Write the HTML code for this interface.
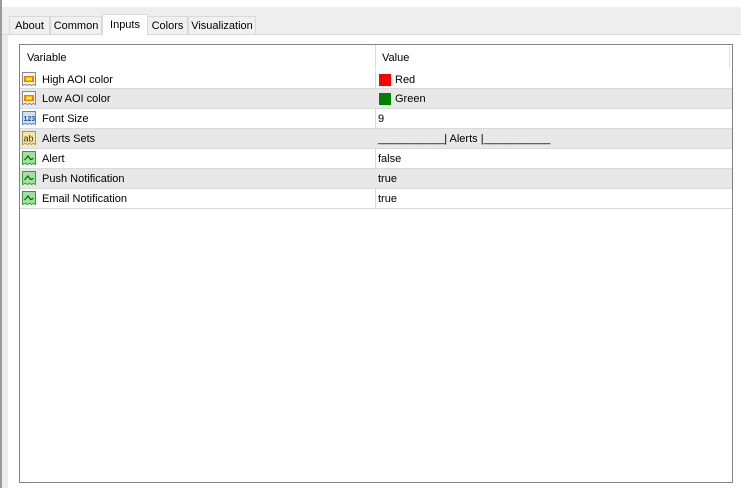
<!DOCTYPE html><html><head><style>
body{margin:0;width:741px;height:488px;background:#fff;font-family:"Liberation Sans",Arial,sans-serif;font-size:11px;color:#000;position:relative;overflow:hidden}
.a{position:absolute}
.tab{position:absolute;top:16px;height:18px;border:1px solid #d9d9d9;border-bottom:none;background:#f0f0f0;line-height:18px;text-align:center;box-sizing:border-box}
.row{position:absolute;left:20px;width:712px;height:20px;border-bottom:1px solid #dadada;box-sizing:border-box;line-height:21px}
.g{background:#e8e8e8}
.v{position:absolute;left:358px;top:0}
.n{position:absolute;left:22px;top:0}
.ic{position:absolute;left:1px;top:1px;width:17px;height:17px}
.u{letter-spacing:-0.6px}
</style></head><body>
<div class="a" style="left:0;top:7px;width:741px;height:27px;background:#eeeeee;border-bottom:1px solid #d9d9d9"></div>
<div class="a" style="left:0;top:0;width:2px;height:488px;background:#9a9a9a"></div>
<div class="a" style="left:2px;top:35px;width:6px;height:453px;background:#ececec"></div>
<div class="tab" style="left:9px;width:41px">About</div>
<div class="tab" style="left:50px;width:52px">Common</div>
<div class="tab" style="left:102px;width:46px;top:14px;height:22px;background:#fff;line-height:20px">Inputs</div>
<div class="tab" style="left:147px;width:41px">Colors</div>
<div class="tab" style="left:188px;width:68px">Visualization</div>
<div class="a" style="left:19px;top:44px;width:712px;height:437px;border:1px solid #80848a;background:#fff"></div>
<div class="a" style="left:375px;top:45px;width:1px;height:164px;background:#dadada"></div>
<div class="row" style="top:48px;border:none"><span class="a" style="left:7px;top:0">Variable</span><span class="a" style="left:362px;top:0">Value</span></div>
<div class="a" style="left:729px;top:46px;width:1px;height:22px;background:#ddd"></div>
<div class="row" style="top:69px;border-top:1px solid #fff"><svg class="ic" viewBox="0 0 17 17"><path d="M1.5 1.5h13v13l-2-1.2-2 1.2-2-1.2-2 1.2-2-1.2-3 1.2z" fill="#f4f4f4" stroke="#888"/><rect x="3" y="5" width="10" height="6" fill="#f70"/><rect x="5" y="6.5" width="6" height="3" fill="#ff0"/></svg><span class="n">High AOI color</span><span class="v"><i class="a" style="left:1px;top:4px;width:12px;height:12px;background:#f00"></i><span class="a" style="left:17px">Red</span></span></div>
<div class="row g" style="top:89px"><svg class="ic" viewBox="0 0 17 17"><path d="M1.5 1.5h13v13l-2-1.2-2 1.2-2-1.2-2 1.2-2-1.2-3 1.2z" fill="#f4f4f4" stroke="#888"/><rect x="3" y="5" width="10" height="6" fill="#f70"/><rect x="5" y="6.5" width="6" height="3" fill="#ff0"/></svg><span class="n">Low AOI color</span><span class="v"><i class="a" style="left:1px;top:4px;width:12px;height:12px;background:#008000"></i><span class="a" style="left:17px">Green</span></span></div>
<div class="row" style="top:109px"><svg class="ic" viewBox="0 0 17 17"><path d="M1.5 1.5h13v13l-2-1.2-2 1.2-2-1.2-2 1.2-2-1.2-3 1.2z" fill="#cfe2f8" stroke="#5b8ac6"/><text x="2.5" y="11" font-size="7" font-weight="bold" fill="#1a4d99" font-family="Liberation Sans">123</text></svg><span class="n">Font Size</span><span class="v">9</span></div>
<div class="row g" style="top:129px"><svg class="ic" viewBox="0 0 17 17"><path d="M1.5 1.5h13v13l-2-1.2-2 1.2-2-1.2-2 1.2-2-1.2-3 1.2z" fill="#f5e59a" stroke="#b09a3a"/><text x="2.5" y="11.5" font-size="9" fill="#333" font-family="Liberation Sans">ab</text></svg><span class="n">Alerts Sets</span><span class="v"><span class="u">____________</span>| Alerts |<span class="u">____________</span></span></div>
<div class="row" style="top:149px"><svg class="ic" viewBox="0 0 17 17"><path d="M1.5 1.5h13v13l-2-1.2-2 1.2-2-1.2-2 1.2-2-1.2-3 1.2z" fill="#9ee29e" stroke="#3a9a3a"/><path d="M3.5 10l3.5-4 2.5 3.5 3-1" fill="none" stroke="#1a5a1a" stroke-width="1.3"/></svg><span class="n">Alert</span><span class="v">false</span></div>
<div class="row g" style="top:169px"><svg class="ic" viewBox="0 0 17 17"><path d="M1.5 1.5h13v13l-2-1.2-2 1.2-2-1.2-2 1.2-2-1.2-3 1.2z" fill="#9ee29e" stroke="#3a9a3a"/><path d="M3.5 10l3.5-4 2.5 3.5 3-1" fill="none" stroke="#1a5a1a" stroke-width="1.3"/></svg><span class="n">Push Notification</span><span class="v">true</span></div>
<div class="row" style="top:189px"><svg class="ic" viewBox="0 0 17 17"><path d="M1.5 1.5h13v13l-2-1.2-2 1.2-2-1.2-2 1.2-2-1.2-3 1.2z" fill="#9ee29e" stroke="#3a9a3a"/><path d="M3.5 10l3.5-4 2.5 3.5 3-1" fill="none" stroke="#1a5a1a" stroke-width="1.3"/></svg><span class="n">Email Notification</span><span class="v">true</span></div>
</body></html>
